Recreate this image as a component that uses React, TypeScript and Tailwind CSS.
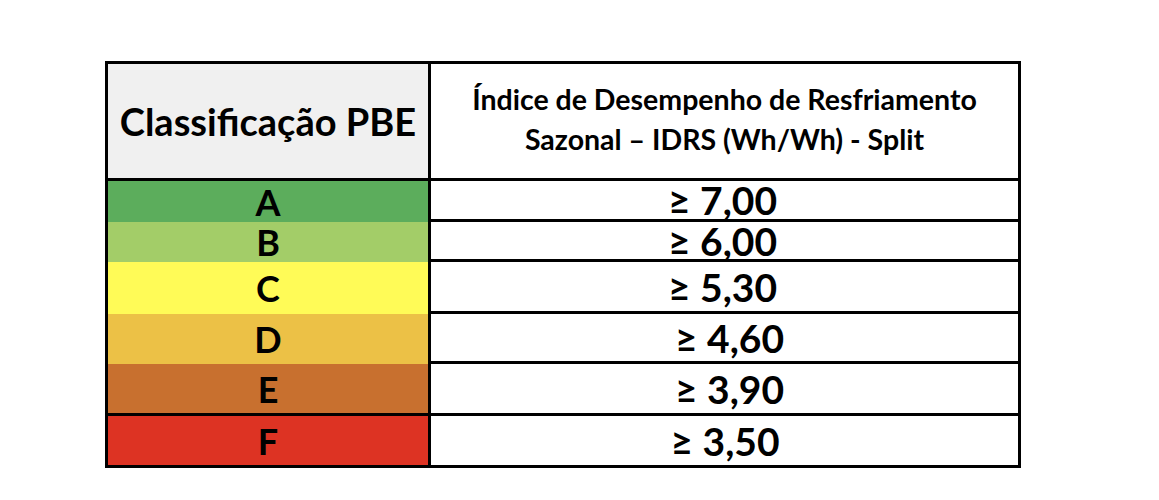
const ROWS = [
  { grade: "A", value: "≥ 7,00", bg: "bg-[#5cad5c]", h: "h-[41px]", shift: "pr-[4px]" },
  { grade: "B", value: "≥ 6,00", bg: "bg-[#a3cd68]", h: "h-[40px]", shift: "pr-[4px]" },
  { grade: "C", value: "≥ 5,30", bg: "bg-[#fffb57]", h: "h-[52px]", shift: "pr-[4px]" },
  { grade: "D", value: "≥ 4,60", bg: "bg-[#ecc146]", h: "h-[50px]", shift: "pl-[10px]" },
  { grade: "E", value: "≥ 3,90", bg: "bg-[#c8702f]", h: "h-[52px]", shift: "pl-[10px]" },
  { grade: "F", value: "≥ 3,50", bg: "bg-[#dd3323]", h: "h-[49px]", shift: "pl-[1px]" },
];

export default function App() {
  return (
    <div className="h-[500px] w-[1159px] bg-white pl-[105px] pt-[61px] font-['Lato','Liberation_Sans',sans-serif] font-bold text-black">
      <div className="flex w-[916px] flex-col border-[3px] border-black">
        {/* Header */}
        <div className="flex h-[117px] border-b-[3px] border-black">
          <div className="flex w-[323px] items-center justify-center border-r-[3px] border-black bg-[#f0f0f0] text-[38px]">
            Classificação PBE
          </div>
          <div className="flex flex-1 flex-col items-center justify-center pb-[4px] text-[28.5px] leading-[40px]">
            <span>Índice de Desempenho de Resfriamento</span>
            <span>Sazonal – IDRS (Wh/Wh) - Split</span>
          </div>
        </div>

        {/* Grade rows */}
        {ROWS.map((r, i) => (
          <div key={r.grade} className={`flex ${r.h}`}>
            <div
              className={`flex w-[323px] items-center justify-center border-r-[3px] border-black ${r.bg} text-[36px] leading-[32px] ${
                r.grade === "E" ? "border-b-[3px]" : ""
              }`}
            >
              {r.grade}
            </div>
            <div
              className={`flex flex-1 items-center justify-center border-black text-[39px] leading-[32px] ${r.shift} ${
                i < ROWS.length - 1 ? "border-b-[3px]" : ""
              }`}
            >
              {r.value}
            </div>
          </div>
        ))}
      </div>
    </div>
  );
}
